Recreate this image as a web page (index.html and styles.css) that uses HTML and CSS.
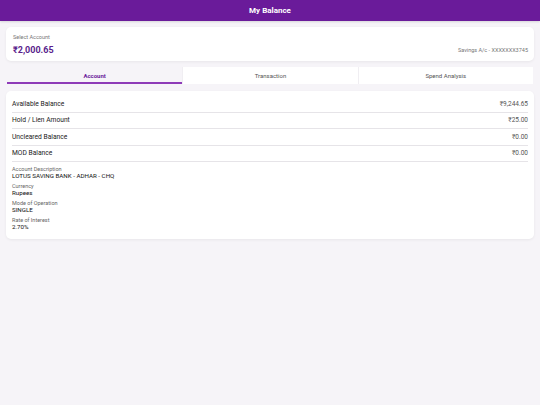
FILE: index.html
```html
<!DOCTYPE html>
<html lang="en">
  <head>
    <meta charset="UTF-8" />
    <meta name="viewport" content="width=device-width, initial-scale=1.0" />
    <title>My Balance</title>
    <link rel="stylesheet" href="styles.css">
  </head>
  <body>
    <header class="toolbar">
      <h1>My Balance</h1>
    </header>

    <main class="content">
      <!-- Account selector -->
      <div class="card account-card">
        <div class="select-label">Select Account</div>
        <div class="account-row">
          <span class="account-amount">₹2,000.65</span>
          <span class="account-number">Savings A/c - XXXXXXX3745</span>
        </div>
      </div>

      <!-- Tabs -->
      <div class="tabs">
        <div class="tab active">Account</div>
        <div class="tab">Transaction</div>
        <div class="tab">Spend Analysis</div>
      </div>

      <!-- Balance details -->
      <div class="card details-card">
        <div class="balance-row">
          <span>Available Balance</span>
          <span class="amount">₹9,244.65</span>
        </div>
        <div class="balance-row">
          <span>Hold / Lien Amount</span>
          <span class="amount">₹25.00</span>
        </div>
        <div class="balance-row">
          <span>Uncleared Balance</span>
          <span class="amount">₹0.00</span>
        </div>
        <div class="balance-row">
          <span>MOD Balance</span>
          <span class="amount">₹0.00</span>
        </div>

        <div class="info-list">
          <div class="info-item">
            <div class="info-label">Account Description</div>
            <div class="info-value">LOTUS SAVING BANK - ADHAR - CHQ</div>
          </div>
          <div class="info-item">
            <div class="info-label">Currency</div>
            <div class="info-value">Rupees</div>
          </div>
          <div class="info-item">
            <div class="info-label">Mode of Operation</div>
            <div class="info-value">SINGLE</div>
          </div>
          <div class="info-item">
            <div class="info-label">Rate of Interest</div>
            <div class="info-value">2.70%</div>
          </div>
        </div>
      </div>
    </main>
  </body>
</html>
```

FILE: styles.css
```css
body {
  font-family: Roboto, "Liberation Sans", sans-serif;
  background: #f6f4f8;
  margin: 0;
  min-height: 100vh;
  color: #222;
}

.toolbar {
  display: flex;
  justify-content: center;
  align-items: center;
  height: 21px;
  background: #6a1b9a;
  box-shadow: 0 1px 2px rgba(0, 0, 0, 0.12);
}

.toolbar h1 {
  margin: 0;
  color: white;
  font-size: 8px;
  font-weight: bold;
}

.content {
  padding: 6px 6px;
}

.card {
  background: white;
  border-radius: 5px;
  box-shadow: 0 1px 3px rgba(0, 0, 0, 0.06);
}

/* Account selector */
.account-card {
  padding: 7px 6px 5px 7px;
}

.select-label {
  font-size: 5.5px;
  line-height: 7px;
  color: #777;
}

.account-row {
  display: flex;
  justify-content: space-between;
  align-items: center;
  margin-top: 3px;
  height: 12px;
}

.account-amount {
  font-size: 9px;
  font-weight: bold;
  color: #5a1e8c;
}

.account-number {
  font-size: 5.5px;
  color: #777;
}

/* Tabs */
.tabs {
  display: grid;
  grid-template-columns: 1fr 1fr 1fr;
  margin: 6px 1px 0;
}

.tab {
  height: 17px;
  display: flex;
  justify-content: center;
  align-items: center;
  font-size: 6px;
  color: #555;
  background: white;
  box-sizing: border-box;
}

.tab + .tab {
  border-left: 1px solid #f0eef2;
}

.tab.active {
  background: transparent;
  color: #6a1b9a;
  font-weight: bold;
  border-bottom: 2px solid #8e3bb8;
  padding-top: 1px;
}

/* Balance details */
.details-card {
  margin-top: 7px;
  padding: 5px 6px 8px;
}

.balance-row {
  display: flex;
  justify-content: space-between;
  align-items: center;
  height: 16.5px;
  box-sizing: border-box;
  border-bottom: 1px solid #e6e4e8;
  font-size: 6.7px;
  color: #222;
}

.balance-row .amount {
  color: #555;
  font-size: 6.5px;
}

.info-list {
  padding-top: 4px;
}

.info-item {
  margin-bottom: 3px;
}

.info-item:last-child {
  margin-bottom: 0;
}

.info-label {
  font-size: 5.5px;
  line-height: 7px;
  color: #666;
}

.info-value {
  font-size: 6.2px;
  line-height: 7px;
  color: #111;
}
```
